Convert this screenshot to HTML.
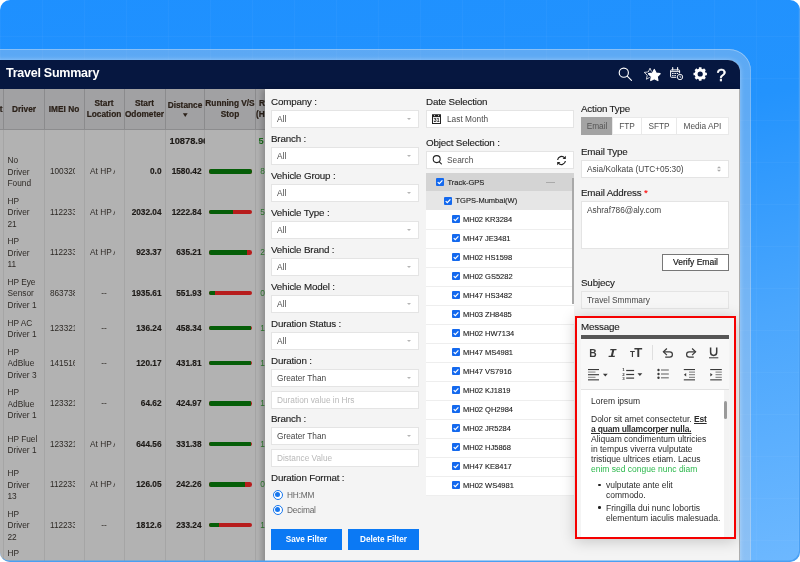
<!DOCTYPE html><html><head><meta charset="utf-8"><title>Travel Summary</title><style>
*{box-sizing:border-box;margin:0;padding:0}
html,body{width:800px;height:562px;overflow:hidden;background:#fff}
body{font-family:"Liberation Sans",sans-serif;position:relative}
.abs{position:absolute}
#bg{position:absolute;left:0;top:0;width:800px;height:562px;border-radius:10px;overflow:hidden;
 background:linear-gradient(168deg,#1e90ff 0%,#2393fd 35%,#4aa6fd 65%,#6db8ff 100%)}
#bg:after{content:"";position:absolute;left:0;top:0;width:800px;height:562px;border-radius:10px;box-shadow:inset -1px -1.5px 0 0 #4aa0f3;z-index:5;pointer-events:none}
#grid{position:absolute;left:0;top:0;width:800px;height:562px;background:repeating-linear-gradient(90deg,rgba(255,255,255,.03) 0,rgba(255,255,255,.03) 1px,transparent 1px,transparent 42px),repeating-linear-gradient(180deg,rgba(255,255,255,.03) 0,rgba(255,255,255,.03) 1px,transparent 1px,transparent 42px);background-size:42px 42px;background-position:0 36px}
#frame{position:absolute;left:-30px;top:49px;width:781px;height:560px;border-radius:22px;
 background:rgba(200,212,228,.36);box-shadow:inset 0 1px 0 rgba(255,255,255,.28), inset -1px 0 0 rgba(255,255,255,.18)}
#win{will-change:transform;position:absolute;left:-20px;top:60px;width:759.5px;height:540px;border-radius:12px;overflow:hidden;background:#b3b3b3;box-shadow:0 0 5px rgba(255,255,255,.38)}
#hdr{position:absolute;left:0;top:0;width:100%;height:29px;background:#061740}
#title{position:absolute;left:26px;top:6px;font-weight:bold;font-size:12.5px;letter-spacing:-.25px;color:#fff;white-space:nowrap}
/* table */
#tbl{position:absolute;left:20px;top:29px;width:266px;height:480px;background:#b2b2b2;overflow:hidden}
#thead{position:absolute;left:0;top:0;width:266px;height:41px;background:#a1a1a3;border-bottom:1px solid #8c8c8e}
.vl{position:absolute;top:0;width:1px;height:480px;background:linear-gradient(#8b8b8d 0,#8b8b8d 41px,#a5a5a5 41px)}
.th{position:absolute;top:0px;-webkit-text-stroke:.2px currentColor;height:40px;display:flex;align-items:center;justify-content:center;text-align:center;font-weight:bold;font-size:8.3px;line-height:11px;color:#2b2119;white-space:nowrap;overflow:hidden}
.td{position:absolute;font-size:8.3px;line-height:11.5px;color:#2e2a26;white-space:nowrap;overflow:hidden}
.num{-webkit-text-stroke:.15px currentColor;font-weight:bold;color:#1d1a17;text-align:right;font-size:8.25px}
.bar{position:absolute;left:208.5px;width:43.5px;height:4.6px;border-radius:2.3px;background:#b71c1c;overflow:hidden}
.bar i{position:absolute;left:0;top:0;height:5px;background:#055e08}
/* panel */
#panel{position:absolute;left:285px;top:29px;width:474px;height:480px;background:#f4f4f4;box-shadow:-3px 0 6px rgba(0,0,0,.22)}
.lbl{position:absolute;font-size:9.8px;letter-spacing:-.17px;color:#1c1c1c;-webkit-text-stroke:.12px currentColor;white-space:nowrap;line-height:11px}
.sel{position:absolute;height:18px;background:#fff;border:1px solid #e4e4e4;font-size:8.3px;color:#4c4c4c;line-height:16.8px;padding-left:5px;white-space:nowrap}
.sel .car{position:absolute;right:7.5px;top:7px;width:0;height:0;border-left:2px solid transparent;border-right:2px solid transparent;border-top:2.2px solid #b5b5b5}
.ph{color:#b9b9b9}
.radio{position:absolute;width:10.4px;height:10.4px;border-radius:50%;border:1.2px solid #1777ee;background:#fff}
.radio:after{content:"";position:absolute;left:1.3px;top:1.3px;width:5.4px;height:5.4px;border-radius:50%;background:#1777ee}
.btn{position:absolute;height:21px;background:#0b79f4;color:#fff;font-weight:bold;font-size:8.2px;line-height:22.6px;text-align:center;white-space:nowrap}
.tl{position:absolute;font-size:7.5px;line-height:10px;color:#1c1c1c;white-space:nowrap;-webkit-text-stroke:.12px currentColor}
.tab{position:absolute;height:17.5px;background:#fff;border:1px solid #e9e9e9;font-size:8.3px;line-height:17px;color:#505050;text-align:center;white-space:nowrap}
.tab.on{background:#a3a3a3;border-color:#a3a3a3;color:#555}
.vbtn{background:#fff;border:1px solid #777;font-size:8.5px;line-height:15px;-webkit-text-stroke:.15px currentColor;text-align:center;color:#111;white-space:nowrap}
#msg{position:absolute;width:161px;height:223px;border:2px solid #f50000;background:#f4f4f4;overflow:hidden;box-shadow:0 2px 14px rgba(0,0,0,.2)}
.ed{position:absolute;font-size:8.5px;line-height:10px;color:#2a2a2a;white-space:nowrap}
.ed b{letter-spacing:-.2px}
</style></head><body>
<div id="bg">
<div id="grid"></div>
<div id="frame"></div>
<div id="win">
<div id="hdr"><div id="title">Travel Summary</div><svg class="abs" style="left:630px;top:0" width="129" height="29" viewBox="610 60 129 29"><circle cx="623.8" cy="72.7" r="4.6" fill="none" stroke="#fff" stroke-width="1.15"/><path d="M627.2 76.2L631.5 80.4" stroke="#fff" stroke-width="1.15" stroke-linecap="round"/><polygon points="650.00,68.20 651.70,71.95 655.80,72.41 652.76,75.20 653.59,79.24 650.00,77.20 646.41,79.24 647.24,75.20 644.20,72.41 648.30,71.95" fill="none" stroke="#fff" stroke-width="0.8" stroke-linejoin="round"/><polygon points="654.30,69.50 656.12,73.09 660.10,73.71 657.25,76.56 657.89,80.54 654.30,78.70 650.71,80.54 651.35,76.56 648.50,73.71 652.48,73.09" fill="#fff" stroke="#061740" stroke-width="3" stroke-linejoin="round"/><polygon points="654.30,69.50 656.12,73.09 660.10,73.71 657.25,76.56 657.89,80.54 654.30,78.70 650.71,80.54 651.35,76.56 648.50,73.71 652.48,73.09" fill="#fff" stroke="#fff" stroke-width="1.2" stroke-linejoin="round"/><rect x="670.6" y="69.9" width="9" height="7.4" rx="0.8" fill="none" stroke="#fff" stroke-width="1"/><path d="M670.6 71.6H679.6" stroke="#fff" stroke-width="0.9"/><path d="M672.7 67.6V70M677.6 67.6V70" stroke="#fff" stroke-width="1.1" stroke-linecap="round"/><path d="M672.1 73.5h1.5M674.4 73.5h1.5M676.7 73.5h1.5M672.1 75.6h1.5M674.4 75.6h1.5" stroke="#fff" stroke-width="1"/><circle cx="680" cy="77" r="3.1" fill="#061740" stroke="#061740" stroke-width="1.4"/><circle cx="680" cy="77" r="2.7" fill="#061740" stroke="#fff" stroke-width="0.9"/><path d="M680 75.5V77.2H681.4" fill="none" stroke="#fff" stroke-width="0.7"/><circle cx="700.2" cy="74.0" r="4.05" fill="none" stroke="#fff" stroke-width="2.9"/><path d="M705.00 74.00L706.90 74.00" stroke="#fff" stroke-width="2.6"/><path d="M703.59 77.39L704.94 78.74" stroke="#fff" stroke-width="2.6"/><path d="M700.20 78.80L700.20 80.70" stroke="#fff" stroke-width="2.6"/><path d="M696.81 77.39L695.46 78.74" stroke="#fff" stroke-width="2.6"/><path d="M695.40 74.00L693.50 74.00" stroke="#fff" stroke-width="2.6"/><path d="M696.81 70.61L695.46 69.26" stroke="#fff" stroke-width="2.6"/><path d="M700.20 69.20L700.20 67.30" stroke="#fff" stroke-width="2.6"/><path d="M703.59 70.61L704.94 69.26" stroke="#fff" stroke-width="2.6"/><text x="721.2" y="80.5" text-anchor="middle" font-family="Liberation Sans, sans-serif" font-size="17" fill="#fff" stroke="#fff" stroke-width="0.5">?</text></svg></div>
<div id="tbl">
<div id="thead"></div>
<div class="vl" style="left:3px"></div>
<div class="vl" style="left:44px"></div>
<div class="vl" style="left:84px"></div>
<div class="vl" style="left:124px"></div>
<div class="vl" style="left:165px"></div>
<div class="vl" style="left:204px"></div>
<div class="vl" style="left:255px"></div>
<div class="th" style="left:4px;width:40px"><div>Driver</div></div>
<div class="th" style="left:44px;width:40px"><div>IMEI No</div></div>
<div class="th" style="left:84px;width:40px"><div>Start<br>Location</div></div>
<div class="th" style="left:124px;width:41px"><div>Start<br>Odometer</div></div>
<div class="th" style="left:165px;width:40px"><div><span style="display:block;margin-top:0px">Distance</span><span style="font-size:6.5px;line-height:6px;display:block;margin-top:0.5px;transform:scaleX(1.25);-webkit-text-stroke:0">&#9660;</span></div></div>
<div class="th" style="left:205px;width:50px"><div>Running V/S<br>Stop</div></div>
<div class="th" style="left:-40px;width:42.5px;justify-content:flex-end;text-align:right">Object</div>
<div class="th" style="left:256px;width:12px;justify-content:flex-start;text-align:left;padding-left:3px"><div>R<br><span style="margin-left:-3px">(H</span></div></div>
<div class="td num" style="left:166px;width:38.5px;top:47.3px;font-size:9.3px;text-align:left;padding-left:3.5px">10878.96</div>
<div class="td" style="left:258.5px;top:47px;font-weight:bold;color:#1b6e1b;font-size:9.3px">5</div>
<div class="td" style="left:7.5px;top:66.25px;width:36px">No<br>Driver<br>Found</div>
<div class="td" style="left:50px;top:77.45px;width:25px;font-size:8.2px">100320</div>
<div class="td" style="left:90px;top:77.45px;width:24.5px">At HP A</div>
<div class="td num" style="left:125px;top:77.45px;width:36.5px">0.0</div>
<div class="td num" style="left:166px;top:77.45px;width:35.5px">1580.42</div>
<div class="bar" style="top:80.0px"><i style="width:100%"></i></div>
<div class="td" style="left:260.3px;top:77.45px;color:#2e7d2e">8</div>
<div class="td" style="left:7.5px;top:106.75px;width:36px">HP<br>Driver<br>21</div>
<div class="td" style="left:50px;top:117.95px;width:25px;font-size:8.2px">112233</div>
<div class="td" style="left:90px;top:117.95px;width:24.5px">At HP A</div>
<div class="td num" style="left:125px;top:117.95px;width:36.5px">2032.04</div>
<div class="td num" style="left:166px;top:117.95px;width:35.5px">1222.84</div>
<div class="bar" style="top:120.5px"><i style="width:56%"></i></div>
<div class="td" style="left:260.3px;top:117.95px;color:#2e7d2e">5</div>
<div class="td" style="left:7.5px;top:147.25px;width:36px">HP<br>Driver<br>11</div>
<div class="td" style="left:50px;top:158.45px;width:25px;font-size:8.2px">112233</div>
<div class="td" style="left:90px;top:158.45px;width:24.5px">At HP A</div>
<div class="td num" style="left:125px;top:158.45px;width:36.5px">923.37</div>
<div class="td num" style="left:166px;top:158.45px;width:35.5px">635.21</div>
<div class="bar" style="top:161.0px"><i style="width:88%"></i></div>
<div class="td" style="left:260.3px;top:158.45px;color:#2e7d2e">2</div>
<div class="td" style="left:7.5px;top:187.75px;width:36px">HP Eye<br>Sensor<br>Driver 1</div>
<div class="td" style="left:50px;top:198.95px;width:25px;font-size:8.2px">863738</div>
<div class="td" style="left:84px;top:198.95px;width:40px;text-align:center">--</div>
<div class="td num" style="left:125px;top:198.95px;width:36.5px">1935.61</div>
<div class="td num" style="left:166px;top:198.95px;width:35.5px">551.93</div>
<div class="bar" style="top:201.5px"><i style="width:16%"></i></div>
<div class="td" style="left:260.3px;top:198.95px;color:#2e7d2e">0</div>
<div class="td" style="left:7.5px;top:228.5px;width:36px">HP AC<br>Driver 1</div>
<div class="td" style="left:50px;top:233.95px;width:25px;font-size:8.2px">123321</div>
<div class="td" style="left:84px;top:233.95px;width:40px;text-align:center">--</div>
<div class="td num" style="left:125px;top:233.95px;width:36.5px">136.24</div>
<div class="td num" style="left:166px;top:233.95px;width:35.5px">458.34</div>
<div class="bar" style="top:236.5px"><i style="width:97%"></i></div>
<div class="td" style="left:260.3px;top:233.95px;color:#2e7d2e">1</div>
<div class="td" style="left:7.5px;top:257.75px;width:36px">HP<br>AdBlue<br>Driver 3</div>
<div class="td" style="left:50px;top:268.95px;width:25px;font-size:8.2px">141516</div>
<div class="td" style="left:84px;top:268.95px;width:40px;text-align:center">--</div>
<div class="td num" style="left:125px;top:268.95px;width:36.5px">120.17</div>
<div class="td num" style="left:166px;top:268.95px;width:35.5px">431.81</div>
<div class="bar" style="top:271.5px"><i style="width:97%"></i></div>
<div class="td" style="left:260.3px;top:268.95px;color:#2e7d2e">1</div>
<div class="td" style="left:7.5px;top:298.25px;width:36px">HP<br>AdBlue<br>Driver 1</div>
<div class="td" style="left:50px;top:309.45px;width:25px;font-size:8.2px">123321</div>
<div class="td" style="left:84px;top:309.45px;width:40px;text-align:center">--</div>
<div class="td num" style="left:125px;top:309.45px;width:36.5px">64.62</div>
<div class="td num" style="left:166px;top:309.45px;width:35.5px">424.97</div>
<div class="bar" style="top:312.0px"><i style="width:97%"></i></div>
<div class="td" style="left:260.3px;top:309.45px;color:#2e7d2e">1</div>
<div class="td" style="left:7.5px;top:344.5px;width:36px">HP Fuel<br>Driver 1</div>
<div class="td" style="left:50px;top:349.95px;width:25px;font-size:8.2px">123321</div>
<div class="td" style="left:90px;top:349.95px;width:24.5px">At HP A</div>
<div class="td num" style="left:125px;top:349.95px;width:36.5px">644.56</div>
<div class="td num" style="left:166px;top:349.95px;width:35.5px">331.38</div>
<div class="bar" style="top:352.5px"><i style="width:97%"></i></div>
<div class="td" style="left:260.3px;top:349.95px;color:#2e7d2e">1</div>
<div class="td" style="left:7.5px;top:379.25px;width:36px">HP<br>Driver<br>13</div>
<div class="td" style="left:50px;top:390.45px;width:25px;font-size:8.2px">112233</div>
<div class="td" style="left:90px;top:390.45px;width:24.5px">At HP A</div>
<div class="td num" style="left:125px;top:390.45px;width:36.5px">126.05</div>
<div class="td num" style="left:166px;top:390.45px;width:35.5px">242.26</div>
<div class="bar" style="top:393.0px"><i style="width:85%"></i></div>
<div class="td" style="left:260.3px;top:390.45px;color:#2e7d2e">0</div>
<div class="td" style="left:7.5px;top:419.75px;width:36px">HP<br>Driver<br>22</div>
<div class="td" style="left:50px;top:430.95px;width:25px;font-size:8.2px">112233</div>
<div class="td" style="left:84px;top:430.95px;width:40px;text-align:center">--</div>
<div class="td num" style="left:125px;top:430.95px;width:36.5px">1812.6</div>
<div class="td num" style="left:166px;top:430.95px;width:35.5px">233.24</div>
<div class="bar" style="top:433.5px"><i style="width:25%"></i></div>
<div class="td" style="left:260.3px;top:430.95px;color:#2e7d2e">1</div>
<div class="td" style="left:7.5px;top:459.25px;width:36px">HP<br>Driver<br>23</div>
</div>
<div id="panel">
<div class="lbl" style="left:6px;top:6.5px;">Company :</div>
<div class="sel " style="left:6px;top:21px;width:148px;">All<span class="car"></span></div>
<div class="lbl" style="left:6px;top:43.5px;">Branch :</div>
<div class="sel " style="left:6px;top:58px;width:148px;">All<span class="car"></span></div>
<div class="lbl" style="left:6px;top:80.5px;">Vehicle Group :</div>
<div class="sel " style="left:6px;top:95px;width:148px;">All<span class="car"></span></div>
<div class="lbl" style="left:6px;top:117.5px;">Vehicle Type :</div>
<div class="sel " style="left:6px;top:132px;width:148px;">All<span class="car"></span></div>
<div class="lbl" style="left:6px;top:154.5px;">Vehicle Brand :</div>
<div class="sel " style="left:6px;top:169px;width:148px;">All<span class="car"></span></div>
<div class="lbl" style="left:6px;top:191.5px;">Vehicle Model :</div>
<div class="sel " style="left:6px;top:206px;width:148px;">All<span class="car"></span></div>
<div class="lbl" style="left:6px;top:228.5px;">Duration Status :</div>
<div class="sel " style="left:6px;top:243px;width:148px;">All<span class="car"></span></div>
<div class="lbl" style="left:6px;top:265.5px;">Duration :</div>
<div class="sel " style="left:6px;top:280px;width:148px;color:#444">Greater Than<span class="car"></span></div>
<div class="sel ph" style="left:6px;top:302px;width:148px;">Duration value in Hrs</div>
<div class="lbl" style="left:6px;top:324.0px;">Branch :</div>
<div class="sel " style="left:6px;top:338px;width:148px;color:#444">Greater Than<span class="car"></span></div>
<div class="sel ph" style="left:6px;top:360px;width:148px;">Distance Value</div>
<div class="lbl" style="left:6px;top:382.5px;">Duration Format :</div>
<div class="radio" style="left:7.600000000000023px;top:400.8px"></div>
<div class="lbl" style="left:22px;top:400.5px;font-size:8.3px;color:#666;-webkit-text-stroke:0">HH:MM</div>
<div class="radio" style="left:7.600000000000023px;top:415.8px"></div>
<div class="lbl" style="left:22px;top:415.5px;font-size:8.3px;color:#666;-webkit-text-stroke:0">Decimal</div>
<div class="btn" style="left:6px;top:440px;width:71px">Save Filter</div>
<div class="btn" style="left:83px;top:440px;width:71px">Delete Filter</div>
<div class="lbl" style="left:161px;top:6.5px;">Date Selection</div>
<div class="sel " style="left:161px;top:21px;width:148px;"><span style="margin-left:15px">Last Month</span></div>
<svg class="abs" style="left:167px;top:25px" width="9" height="10" viewBox="0 0 9 10"><rect x="0.5" y="1" width="8" height="8.5" fill="#fff" stroke="#222" stroke-width="1"/><rect x="0" y="0.5" width="9" height="2.6" fill="#222"/><path d="M2 1.6h1M6 1.6h1" stroke="#fff" stroke-width="0.8"/><text x="4.5" y="8.4" font-size="5.6" font-family="Liberation Sans, sans-serif" text-anchor="middle" fill="#111" font-weight="bold">31</text></svg>
<div class="lbl" style="left:161px;top:48.099999999999994px;">Object Selection :</div>
<div class="sel " style="left:161px;top:62px;width:148px;"><span style="margin-left:15px">Search</span></div>
<svg class="abs" style="left:167px;top:65px" width="11" height="11" viewBox="432 154 11 11"><circle cx="436.7" cy="159.1" r="3.5" fill="none" stroke="#222" stroke-width="1.05"/><path d="M439.3 161.8L441.4 163.9" stroke="#222" stroke-width="1.1" stroke-linecap="round"/></svg>
<svg class="abs" style="left:291px;top:65.5px" width="11" height="11" viewBox="0 0 11 11"><path d="M1.6 5A4 4 0 0 1 8.6 2.9" fill="none" stroke="#222" stroke-width="1.2"/><path d="M9.4 6A4 4 0 0 1 2.4 8.1" fill="none" stroke="#222" stroke-width="1.2"/><path d="M9.8 0.8V4H6.6Z" fill="#222"/><path d="M1.2 10.2V7H4.4Z" fill="#222"/></svg>
<div class="abs" style="left:161px;top:83.5px;width:148px;height:18.5px;background:#d4d4d4"></div>
<div class="abs" style="left:161px;top:102px;width:148px;height:19px;background:#e6e6e6"></div>
<div class="abs" style="left:161px;top:121px;width:148px;height:285px;background:#fff"></div>
<svg class="abs" style="left:171px;top:89px" width="8" height="8" viewBox="0 0 8 8"><rect width="8" height="8" rx="1" fill="#1469ee"/><path d="M1.7 4.1L3.3 5.7L6.4 2.3" fill="none" stroke="#fff" stroke-width="1.2"/></svg>
<div class="tl" style="left:182.5px;top:88.5px">Track-GPS</div>
<div class="abs" style="left:281px;top:92.5px;width:8.5px;height:1.6px;background:#aaa"></div>
<svg class="abs" style="left:179px;top:107.5px" width="8" height="8" viewBox="0 0 8 8"><rect width="8" height="8" rx="1" fill="#1469ee"/><path d="M1.7 4.1L3.3 5.7L6.4 2.3" fill="none" stroke="#fff" stroke-width="1.2"/></svg>
<div class="tl" style="left:190.5px;top:107px">TGPS-Mumbai(W)</div>
<svg class="abs" style="left:187px;top:126px" width="8" height="8" viewBox="0 0 8 8"><rect width="8" height="8" rx="1" fill="#1469ee"/><path d="M1.7 4.1L3.3 5.7L6.4 2.3" fill="none" stroke="#fff" stroke-width="1.2"/></svg>
<div class="tl" style="left:198px;top:125.5px">MH02 KR3284</div>
<div class="abs" style="left:161px;top:139.5px;width:148px;height:1px;background:#eee"></div>
<svg class="abs" style="left:187px;top:145px" width="8" height="8" viewBox="0 0 8 8"><rect width="8" height="8" rx="1" fill="#1469ee"/><path d="M1.7 4.1L3.3 5.7L6.4 2.3" fill="none" stroke="#fff" stroke-width="1.2"/></svg>
<div class="tl" style="left:198px;top:144.5px">MH47 JE3481</div>
<div class="abs" style="left:161px;top:158.5px;width:148px;height:1px;background:#eee"></div>
<svg class="abs" style="left:187px;top:164px" width="8" height="8" viewBox="0 0 8 8"><rect width="8" height="8" rx="1" fill="#1469ee"/><path d="M1.7 4.1L3.3 5.7L6.4 2.3" fill="none" stroke="#fff" stroke-width="1.2"/></svg>
<div class="tl" style="left:198px;top:163.5px">MH02 HS1598</div>
<div class="abs" style="left:161px;top:177.5px;width:148px;height:1px;background:#eee"></div>
<svg class="abs" style="left:187px;top:183px" width="8" height="8" viewBox="0 0 8 8"><rect width="8" height="8" rx="1" fill="#1469ee"/><path d="M1.7 4.1L3.3 5.7L6.4 2.3" fill="none" stroke="#fff" stroke-width="1.2"/></svg>
<div class="tl" style="left:198px;top:182.5px">MH02 GS5282</div>
<div class="abs" style="left:161px;top:196.5px;width:148px;height:1px;background:#eee"></div>
<svg class="abs" style="left:187px;top:202px" width="8" height="8" viewBox="0 0 8 8"><rect width="8" height="8" rx="1" fill="#1469ee"/><path d="M1.7 4.1L3.3 5.7L6.4 2.3" fill="none" stroke="#fff" stroke-width="1.2"/></svg>
<div class="tl" style="left:198px;top:201.5px">MH47 HS3482</div>
<div class="abs" style="left:161px;top:215.5px;width:148px;height:1px;background:#eee"></div>
<svg class="abs" style="left:187px;top:221px" width="8" height="8" viewBox="0 0 8 8"><rect width="8" height="8" rx="1" fill="#1469ee"/><path d="M1.7 4.1L3.3 5.7L6.4 2.3" fill="none" stroke="#fff" stroke-width="1.2"/></svg>
<div class="tl" style="left:198px;top:220.5px">MH03 ZH8485</div>
<div class="abs" style="left:161px;top:234.5px;width:148px;height:1px;background:#eee"></div>
<svg class="abs" style="left:187px;top:240px" width="8" height="8" viewBox="0 0 8 8"><rect width="8" height="8" rx="1" fill="#1469ee"/><path d="M1.7 4.1L3.3 5.7L6.4 2.3" fill="none" stroke="#fff" stroke-width="1.2"/></svg>
<div class="tl" style="left:198px;top:239.5px">MH02 HW7134</div>
<div class="abs" style="left:161px;top:253.5px;width:148px;height:1px;background:#eee"></div>
<svg class="abs" style="left:187px;top:259px" width="8" height="8" viewBox="0 0 8 8"><rect width="8" height="8" rx="1" fill="#1469ee"/><path d="M1.7 4.1L3.3 5.7L6.4 2.3" fill="none" stroke="#fff" stroke-width="1.2"/></svg>
<div class="tl" style="left:198px;top:258.5px">MH47 MS4981</div>
<div class="abs" style="left:161px;top:272.5px;width:148px;height:1px;background:#eee"></div>
<svg class="abs" style="left:187px;top:278px" width="8" height="8" viewBox="0 0 8 8"><rect width="8" height="8" rx="1" fill="#1469ee"/><path d="M1.7 4.1L3.3 5.7L6.4 2.3" fill="none" stroke="#fff" stroke-width="1.2"/></svg>
<div class="tl" style="left:198px;top:277.5px">MH47 VS7916</div>
<div class="abs" style="left:161px;top:291.5px;width:148px;height:1px;background:#eee"></div>
<svg class="abs" style="left:187px;top:297px" width="8" height="8" viewBox="0 0 8 8"><rect width="8" height="8" rx="1" fill="#1469ee"/><path d="M1.7 4.1L3.3 5.7L6.4 2.3" fill="none" stroke="#fff" stroke-width="1.2"/></svg>
<div class="tl" style="left:198px;top:296.5px">MH02 KJ1819</div>
<div class="abs" style="left:161px;top:310.5px;width:148px;height:1px;background:#eee"></div>
<svg class="abs" style="left:187px;top:316px" width="8" height="8" viewBox="0 0 8 8"><rect width="8" height="8" rx="1" fill="#1469ee"/><path d="M1.7 4.1L3.3 5.7L6.4 2.3" fill="none" stroke="#fff" stroke-width="1.2"/></svg>
<div class="tl" style="left:198px;top:315.5px">MH02 QH2984</div>
<div class="abs" style="left:161px;top:329.5px;width:148px;height:1px;background:#eee"></div>
<svg class="abs" style="left:187px;top:335px" width="8" height="8" viewBox="0 0 8 8"><rect width="8" height="8" rx="1" fill="#1469ee"/><path d="M1.7 4.1L3.3 5.7L6.4 2.3" fill="none" stroke="#fff" stroke-width="1.2"/></svg>
<div class="tl" style="left:198px;top:334.5px">MH02 JR5284</div>
<div class="abs" style="left:161px;top:348.5px;width:148px;height:1px;background:#eee"></div>
<svg class="abs" style="left:187px;top:354px" width="8" height="8" viewBox="0 0 8 8"><rect width="8" height="8" rx="1" fill="#1469ee"/><path d="M1.7 4.1L3.3 5.7L6.4 2.3" fill="none" stroke="#fff" stroke-width="1.2"/></svg>
<div class="tl" style="left:198px;top:353.5px">MH02 HJ5868</div>
<div class="abs" style="left:161px;top:367.5px;width:148px;height:1px;background:#eee"></div>
<svg class="abs" style="left:187px;top:373px" width="8" height="8" viewBox="0 0 8 8"><rect width="8" height="8" rx="1" fill="#1469ee"/><path d="M1.7 4.1L3.3 5.7L6.4 2.3" fill="none" stroke="#fff" stroke-width="1.2"/></svg>
<div class="tl" style="left:198px;top:372.5px">MH47 KE8417</div>
<div class="abs" style="left:161px;top:386.5px;width:148px;height:1px;background:#eee"></div>
<svg class="abs" style="left:187px;top:392px" width="8" height="8" viewBox="0 0 8 8"><rect width="8" height="8" rx="1" fill="#1469ee"/><path d="M1.7 4.1L3.3 5.7L6.4 2.3" fill="none" stroke="#fff" stroke-width="1.2"/></svg>
<div class="tl" style="left:198px;top:391.5px">MH02 WS4981</div>
<div class="abs" style="left:161px;top:405.5px;width:148px;height:1px;background:#eee"></div>
<div class="abs" style="left:307px;top:89px;width:2px;height:126px;background:#a9a9a9"></div>
<div class="lbl" style="left:316px;top:13.5px;">Action Type</div>
<div class="tab on" style="left:316px;top:28px;width:32px">Email</div>
<div class="tab" style="left:347px;top:28px;width:30px">FTP</div>
<div class="tab" style="left:376px;top:28px;width:36px">SFTP</div>
<div class="tab" style="left:411px;top:28px;width:53px">Media API</div>
<div class="lbl" style="left:316px;top:56.5px;">Email Type</div>
<div class="sel " style="left:316px;top:71px;width:148px;color:#444">Asia/Kolkata (UTC+05:30)</div>
<svg class="abs" style="left:451px;top:76px" width="6" height="8" viewBox="0 0 6 8"><path d="M1 3.2L3 1.2L5 3.2Z M1 4.8L3 6.8L5 4.8Z" fill="#aaa"/></svg>
<div class="lbl" style="left:316px;top:97.5px;">Email Address <span style="color:#f00">*</span></div>
<div class="sel " style="left:316px;top:112px;width:148px;height:48px;color:#444;line-height:14px;padding-top:0.6px">Ashraf786@aly.com</div>
<div class="abs vbtn" style="left:397px;top:165px;width:67px;height:17px">Verify Email</div>
<div class="lbl" style="left:316px;top:187.5px;">Subjecy</div>
<div class="sel " style="left:316px;top:202px;width:148px;background:#f6f6f6;color:#444">Travel Smmmary</div>
<div id="msg" style="left:310px;top:227px">
<div class="lbl" style="left:4px;top:3px">Message</div>
<div class="abs" style="left:4px;top:17px;width:148px;height:3.5px;background:#555"></div>
<div class="abs" style="left:4px;top:21px;width:148px;height:51px;background:#f8f8f8;border-bottom:1px solid #e2e2e2"></div>
<div class="abs" style="left:4px;top:72px;width:148px;height:160px;background:#fff"></div>
<div class="abs" style="left:146.5px;top:72px;width:5.5px;height:160px;background:#f3f3f3"></div>
<div class="abs" style="left:147.29999999999995px;top:83.19999999999999px;width:3px;height:17.6px;background:#9a9a9a;border-radius:1.5px"></div>
<div class="ed" style="left:14px;top:77.5px">Lorem ipsum</div>
<div class="ed" style="left:14px;top:95.5px">Dolor sit amet consectetur. <b><u>Est</u></b><br><b><u>a quam ullamcorper nulla.</u></b><br>Aliquam condimentum ultricies<br>in tempus viverra vulputate<br>tristique ultrices etiam. Lacus<br><span style="color:#2db84d">enim sed congue nunc diam</span></div>
<div class="ed" style="left:29px;top:162px">vulputate ante elit<br>commodo.</div>
<div class="ed" style="left:29px;top:184.5px">Fringilla dui nunc lobortis<br>elementum iaculis malesuada.</div>
<div class="abs" style="left:21.200000000000045px;top:165.7px;width:2.6px;height:2.6px;border-radius:50%;background:#222"></div>
<div class="abs" style="left:21.200000000000045px;top:188.2px;width:2.6px;height:2.6px;border-radius:50%;background:#222"></div>
<svg class="abs" style="left:4px;top:21px" width="148" height="51" viewBox="581 339 148 51"><text x="589.2" y="356.5" font-family="Liberation Sans, sans-serif" font-weight="bold" font-size="11.2" textLength="7.4" lengthAdjust="spacingAndGlyphs" fill="#3a3a3a">B</text><text x="0" y="0" transform="translate(608.3 356.5) scale(1.3 1)" font-family="DejaVu Sans Mono, monospace" font-style="oblique" font-weight="bold" font-size="11" fill="#3a3a3a">I</text><text x="629.9" y="356.5" font-family="Liberation Sans, sans-serif" font-weight="bold" font-size="9.2" textLength="4.9" lengthAdjust="spacingAndGlyphs" fill="#3a3a3a">T</text><text x="634.3" y="356.5" font-family="Liberation Sans, sans-serif" font-weight="bold" font-size="13.2" fill="#3a3a3a">T</text><rect x="652.1" y="345" width="0.9" height="15" fill="#dcdcdc"/><path d="M663.6 351.8H669.7A2.7 2.7 0 0 1 669.7 357.2H665.2" fill="none" stroke="#3a3a3a" stroke-width="1.2"/><path d="M666.9 348.5L663.4 351.8L666.9 355.1" fill="none" stroke="#3a3a3a" stroke-width="1.2"/><path d="M695.4 351.8H689.3A2.7 2.7 0 0 0 689.3 357.2H693.8" fill="none" stroke="#3a3a3a" stroke-width="1.2"/><path d="M692.1 348.5L695.6 351.8L692.1 355.1" fill="none" stroke="#3a3a3a" stroke-width="1.2"/><path d="M710.6 347.5V352.3A3.05 3.1 0 0 0 716.7 352.3V347.5" fill="none" stroke="#3a3a3a" stroke-width="1.5"/><rect x="709" y="357.3" width="9.3" height="1" fill="#3a3a3a"/><rect x="588" y="369" width="11" height="1.1" fill="#3a3a3a"/><rect x="588" y="371.6" width="7.5" height="0.9" fill="#777"/><rect x="588" y="374.15" width="11" height="1.1" fill="#3a3a3a"/><rect x="588" y="376.8" width="7.5" height="0.9" fill="#777"/><rect x="588" y="379.3" width="11" height="1.1" fill="#3a3a3a"/><path d="M602.9 373.7H607.7L605.3 376.5Z" fill="#3a3a3a"/><rect x="626.2" y="369.9" width="7.9" height="1.2" fill="#3a3a3a"/><rect x="626.2" y="373.9" width="7.9" height="1.2" fill="#3a3a3a"/><rect x="626.2" y="377.5" width="7.9" height="1.2" fill="#3a3a3a"/><text x="622.2" y="371.3" font-family="Liberation Sans, sans-serif" font-weight="bold" font-size="4.4" fill="#3a3a3a">1</text><text x="622.2" y="375.6" font-family="Liberation Sans, sans-serif" font-weight="bold" font-size="4.4" fill="#3a3a3a">2</text><text x="622.2" y="379.9" font-family="Liberation Sans, sans-serif" font-weight="bold" font-size="4.4" fill="#3a3a3a">3</text><path d="M637.5 373.2H642.3L639.9 376Z" fill="#3a3a3a"/><rect x="661" y="369.4" width="7.8" height="1.2" fill="#777"/><circle cx="658.5" cy="370" r="1.2" fill="#3a3a3a"/><rect x="661" y="373.4" width="7.8" height="1.2" fill="#777"/><circle cx="658.5" cy="374" r="1.2" fill="#3a3a3a"/><rect x="661" y="377.2" width="7.8" height="1.2" fill="#777"/><circle cx="658.5" cy="377.8" r="1.2" fill="#3a3a3a"/><rect x="683.8" y="369" width="11.2" height="1.1" fill="#3a3a3a"/><rect x="683.8" y="379.3" width="11.2" height="1.1" fill="#3a3a3a"/><rect x="689" y="371.6" width="6" height="1" fill="#777"/><rect x="689" y="374.2" width="6" height="1" fill="#777"/><rect x="689" y="376.8" width="6" height="1" fill="#777"/><path d="M686.2 372.9V376.5L683.9 374.7Z" fill="#3a3a3a"/><rect x="710.2" y="369" width="11.6" height="1.1" fill="#3a3a3a"/><rect x="710.2" y="379.3" width="11.6" height="1.1" fill="#3a3a3a"/><rect x="715.5" y="371.6" width="6.3" height="1" fill="#777"/><rect x="715.5" y="374.2" width="6.3" height="1" fill="#777"/><rect x="715.5" y="376.8" width="6.3" height="1" fill="#777"/><path d="M710.3 372.9V376.5L712.6 374.7Z" fill="#3a3a3a"/></svg>
</div>
</div>
</div></div></body></html>
